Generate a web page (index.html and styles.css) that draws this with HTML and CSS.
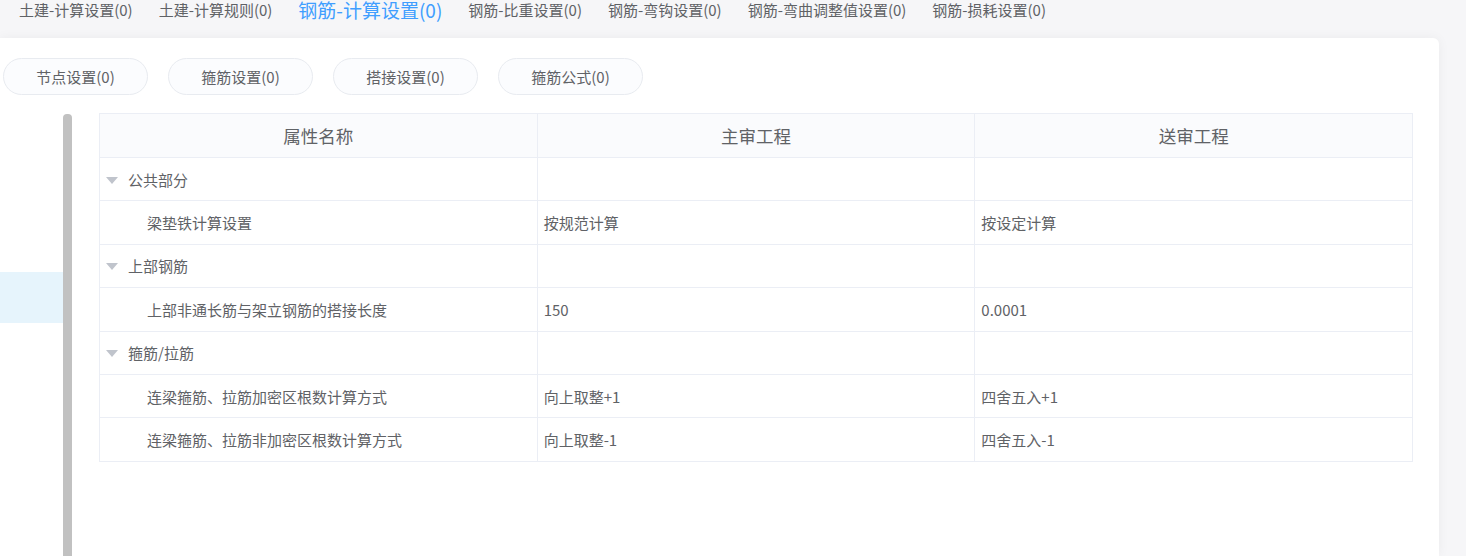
FILE: index.html
```html
<!DOCTYPE html>
<html lang="zh-CN">
<head>
  <meta charset="UTF-8" />
  <title>计算设置对比</title>
  <link rel="stylesheet" href="styles.css">
</head>
<body>
  <!-- 顶部页签 -->
  <div class="tabs">
    <span class="tab">土建-计算设置(0)</span>
    <span class="tab">土建-计算规则(0)</span>
    <span class="tab active">钢筋-计算设置(0)</span>
    <span class="tab">钢筋-比重设置(0)</span>
    <span class="tab">钢筋-弯钩设置(0)</span>
    <span class="tab">钢筋-弯曲调整值设置(0)</span>
    <span class="tab">钢筋-损耗设置(0)</span>
  </div>

  <div class="card">
    <div class="pills">
      <button class="pill">节点设置(0)</button>
      <button class="pill">箍筋设置(0)</button>
      <button class="pill">搭接设置(0)</button>
      <button class="pill">箍筋公式(0)</button>
    </div>

    <div class="main">
      <div class="side">
        <div class="side-item"></div>
        <div class="side-item"></div>
        <div class="side-item"></div>
        <div class="side-item current"></div>
      </div>
      <div class="scrollbar"></div>

      <table class="grid">
        <thead>
          <tr><th>属性名称</th><th>主审工程</th><th>送审工程</th></tr>
        </thead>
        <tbody>
          <tr class="group"><td><i class="caret"></i>公共部分</td><td></td><td></td></tr>
          <tr><td class="child">梁垫铁计算设置</td><td>按规范计算</td><td>按设定计算</td></tr>
          <tr class="group"><td><i class="caret"></i>上部钢筋</td><td></td><td></td></tr>
          <tr><td class="child">上部非通长筋与架立钢筋的搭接长度</td><td>150</td><td>0.0001</td></tr>
          <tr class="group"><td><i class="caret"></i>箍筋/拉筋</td><td></td><td></td></tr>
          <tr><td class="child">连梁箍筋、拉筋加密区根数计算方式</td><td>向上取整+1</td><td>四舍五入+1</td></tr>
          <tr><td class="child">连梁箍筋、拉筋非加密区根数计算方式</td><td>向上取整-1</td><td>四舍五入-1</td></tr>
        </tbody>
      </table>
    </div>
  </div>
</body>
</html>
```

FILE: styles.css
```css
html, body {
  margin: 0;
  padding: 0;
  height: 100vh;
  overflow: hidden;
  background: #f6f6f8;
  font-family: "Noto Sans CJK SC", "Noto Sans", sans-serif;
  color: #606266;
  font-size: 15px;
}

.tabs {
  display: flex;
  align-items: center;
  gap: 26px;
  height: 20px;
  padding: 0 0 18px 19px;
}
.tab {
  font-size: 15px;
  line-height: 20px;
  white-space: nowrap;
}
.tab.active {
  font-size: 19px;
  color: #409eff;
}

.card {
  height: calc(100vh - 38px);
  margin-right: 27px;
  background: #fff;
  border-radius: 0 6px 0 0;
  box-shadow: 0 0 12px rgba(0, 0, 0, 0.05);
  display: flex;
  flex-direction: column;
}

.pills {
  display: flex;
  gap: 20px;
  padding: 20px 0 0 3px;
}
.pill {
  width: 145px;
  height: 37px;
  border: 1px solid #e8ebf0;
  border-radius: 19px;
  background: #fbfcfe;
  color: #606266;
  font-family: inherit;
  font-size: 15px;
  padding: 0;
}

.main {
  flex: 1;
  display: flex;
  align-items: flex-start;
  margin-top: 18px;
}

.side {
  width: 63px;
  flex: none;
}
.side-item { height: 53px; }
.side-item.current {
  height: 51px;
  background: #e6f4fc;
}

.scrollbar {
  width: 9px;
  height: 500px;
  margin-top: 1px;
  flex: none;
  background: #c1c1c1;
  border-radius: 4px 4px 0 0;
}

.grid {
  width: 1314px;
  margin-left: 27px;
  border-collapse: collapse;
  table-layout: fixed;
}
.grid th, .grid td {
  border: 1px solid #ebeef5;
  height: 42.4px;
  padding: 0 6px;
  text-align: left;
  font-weight: normal;
  white-space: nowrap;
}
.grid th {
  height: 43px;
  text-align: center;
  font-size: 17.5px;
  background: #fafbfd;
}
.grid td.child { padding-left: 47px; }

.caret {
  display: inline-block;
  width: 0;
  height: 0;
  border-left: 6px solid transparent;
  border-right: 6px solid transparent;
  border-top: 7px solid #c0c4cc;
  margin-right: 10px;
  vertical-align: 2px;
}
```
